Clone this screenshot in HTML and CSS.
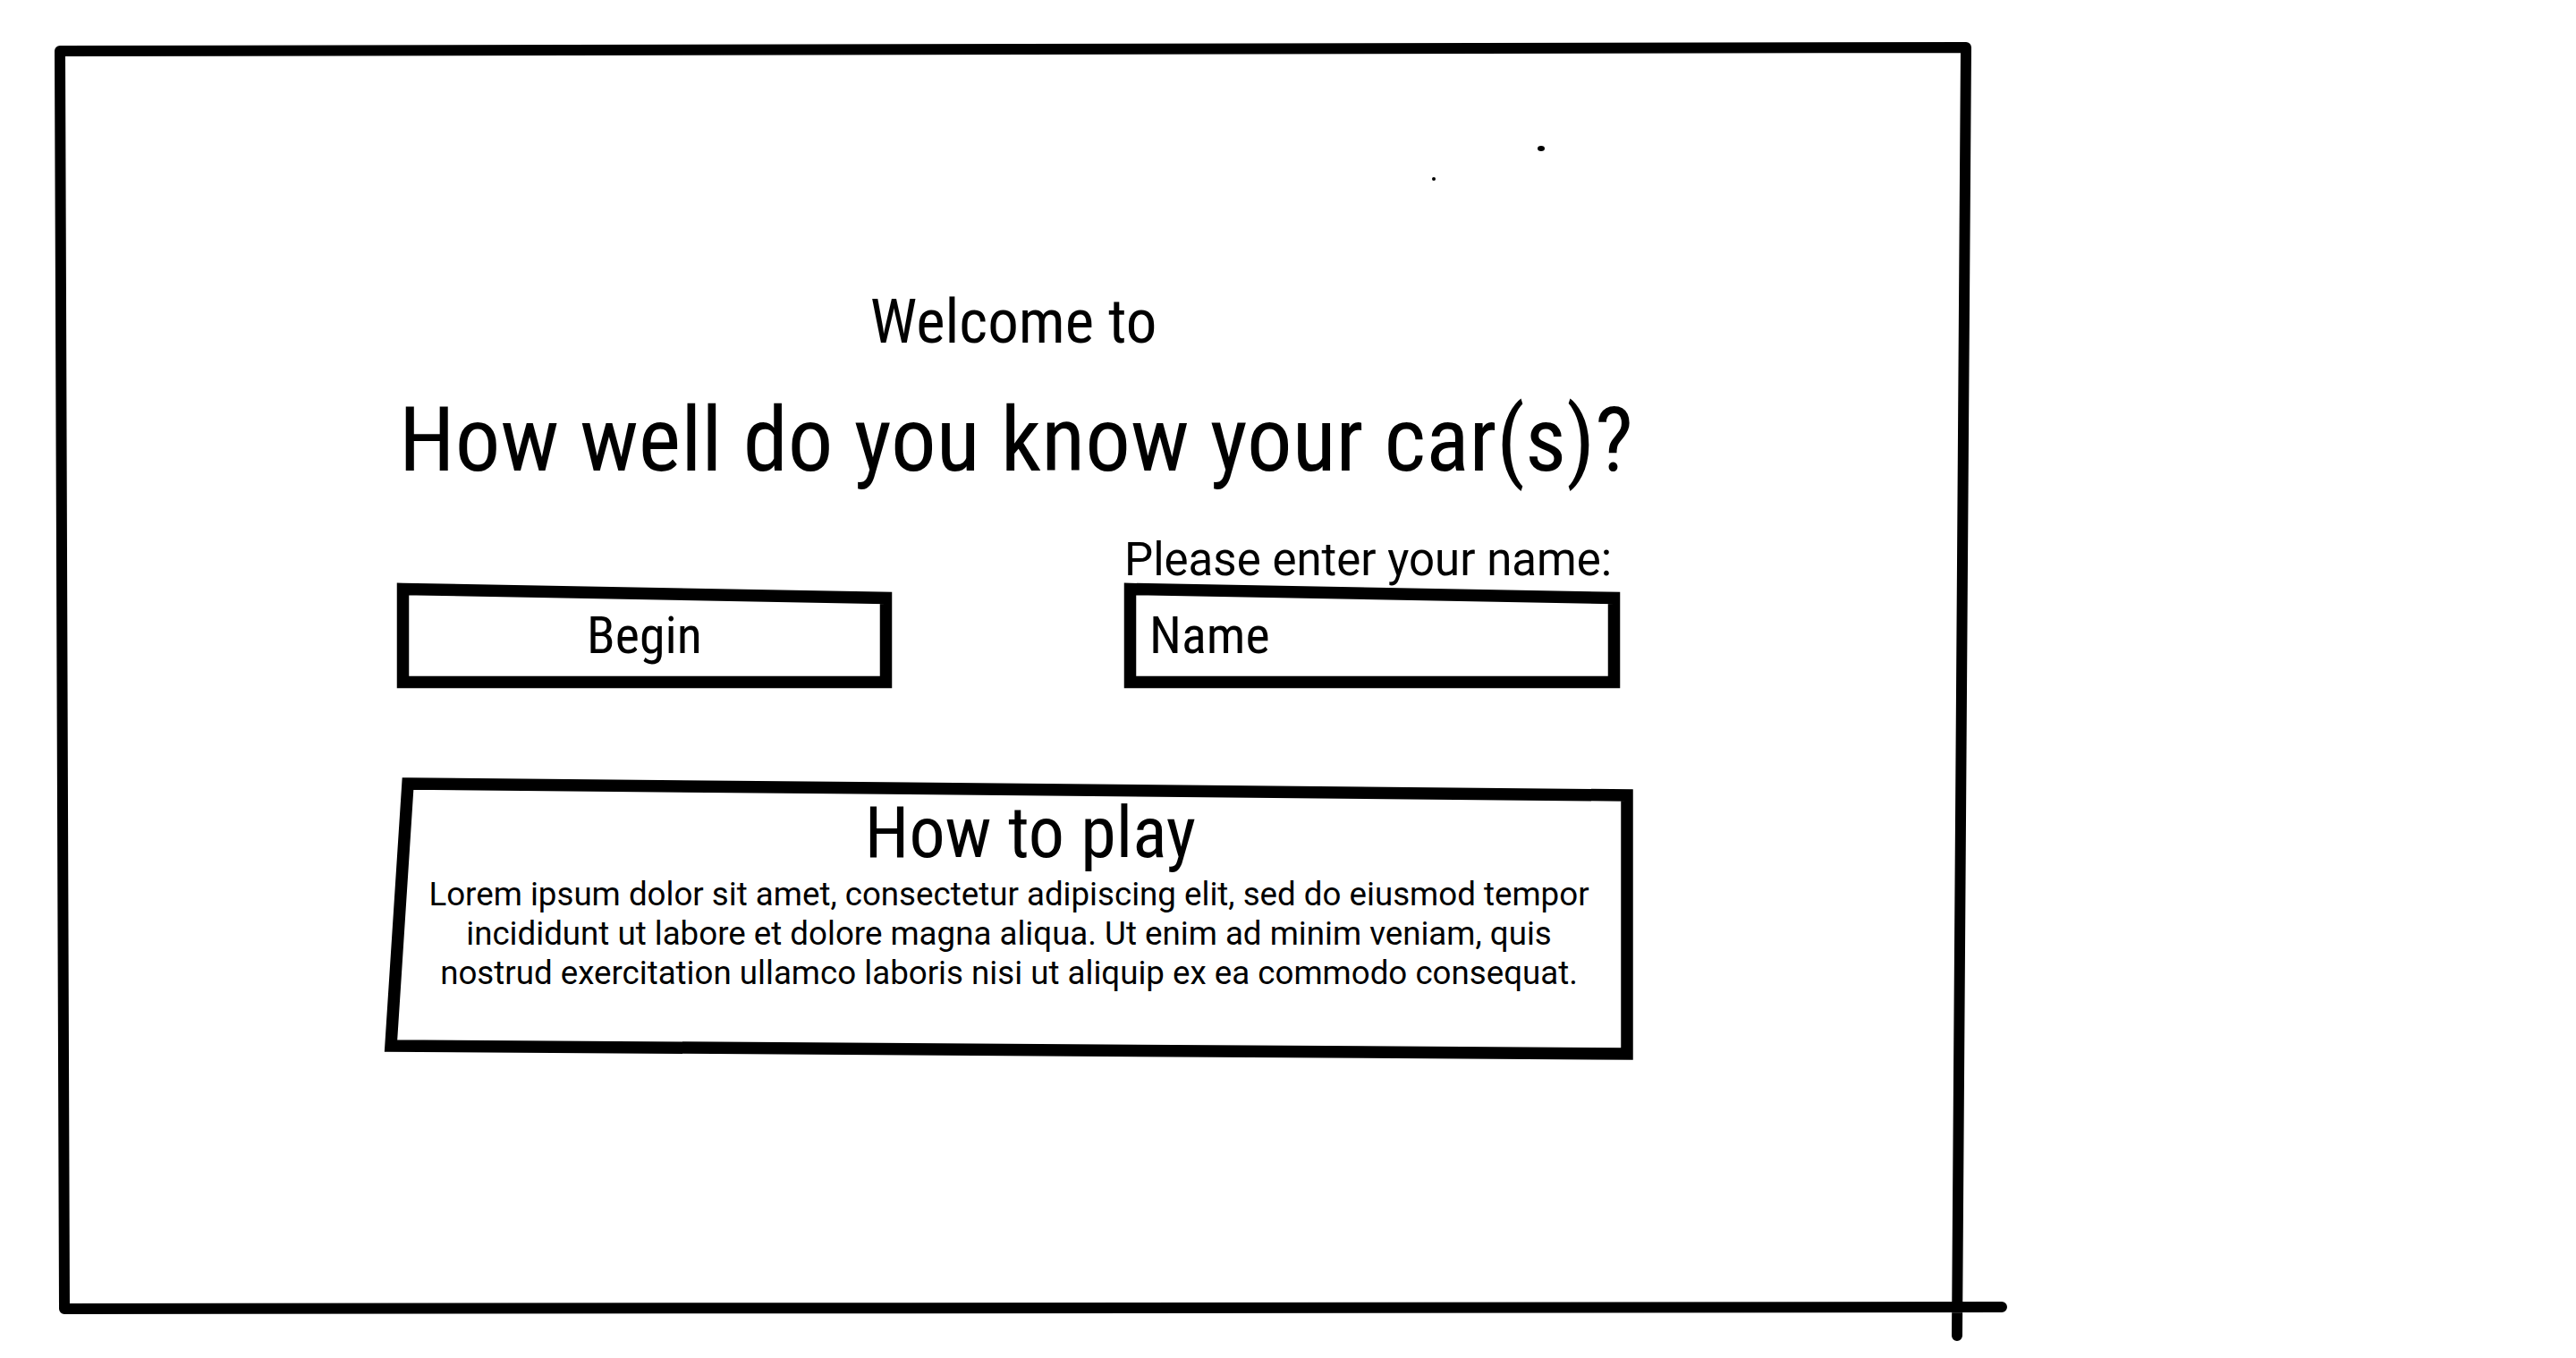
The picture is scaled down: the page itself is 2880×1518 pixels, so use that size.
FILE: index.html
```html
<!DOCTYPE html>
<html>
<head lang="en">
    <meta charset="UTF-8">
    <title>How well do you know your car(s)?</title>
    <link rel="stylesheet" href="styles.css">
</head>
<body>
<svg class="frame" width="2880" height="1518" viewBox="0 0 2880 1518">
    <path d="M67 57 L2198 53 M2198 53 L2188 1493 M72 1463 L2238 1461 M67 57 L72 1463"/>
    <ellipse cx="1723" cy="166" rx="4" ry="3"/>
    <circle cx="1603" cy="200" r="2"/>
</svg>
<div id="sheet">
    <h2 class="welcome">Welcome to</h2>
    <h1 class="title">How well do you know your car(s)?</h1>
    <div class="row">
        <div class="box btn">
            <svg class="edge" width="553" height="117" viewBox="0 0 553 117">
                <polygon points="6.5,6.5 546.5,16.5 546.5,110.5 6.5,110.5"/>
            </svg>
            <span>Begin</span>
        </div>
        <div class="field">
            <label class="label" for="name">Please enter your name:</label>
            <div class="box input">
                <svg class="edge" width="554" height="117" viewBox="0 0 554 117">
                    <polygon points="6.5,6.5 547.5,16.5 547.5,110.5 6.5,110.5"/>
                </svg>
                <span id="name">Name</span>
            </div>
        </div>
    </div>
    <div class="box howto">
        <svg class="edge" width="1396" height="316" viewBox="0 0 1396 316">
            <polygon points="26,7 1389,20 1389,309 7,300"/>
        </svg>
        <h3>How to play</h3>
        <p>Lorem ipsum dolor sit amet, consectetur adipiscing elit, sed do eiusmod tempor<br>
            incididunt ut labore et dolore magna aliqua. Ut enim ad minim veniam, quis<br>
            nostrud exercitation ullamco laboris nisi ut aliquip ex ea commodo consequat.</p>
    </div>
</div>
</body>
</html>
```

FILE: styles.css
```css
* {
    margin: 0;
    padding: 0;
    box-sizing: border-box;
}
html, body {
    background: #fff;
}
body {
    width: 2880px;
    height: 1518px;
    position: relative;
    overflow: hidden;
    font-family: Roboto, "Liberation Sans", sans-serif;
    font-weight: 400;
    color: #000;
}
.frame {
    position: absolute;
    top: 0;
    left: 0;
}
.frame path {
    fill: none;
    stroke: #000;
    stroke-width: 12;
    stroke-linecap: round;
}
.frame ellipse, .frame circle {
    fill: #000;
}
#sheet {
    position: relative;
    width: 1396px;
    margin-left: 430px;
    padding-top: 324px;
}
.welcome {
    font-size: 69px;
    line-height: 72px;
    font-weight: 400;
    font-stretch: 84%;
    text-align: center;
    padding-left: 10px;
}
.title {
    margin-top: 42px;
    font-size: 101px;
    line-height: 107px;
    font-weight: 400;
    font-stretch: 84%;
    text-align: center;
    white-space: nowrap;
    padding-left: 16px;
}
.row {
    margin-top: 57px;
    padding-left: 14px;
    display: grid;
    grid-template-columns: 553px 554px;
    column-gap: 260px;
    align-items: end;
}
.label {
    display: block;
    font-size: 51px;
    line-height: 48px;
    margin-bottom: 2px;
    white-space: nowrap;
}
.box {
    position: relative;
}
.edge {
    position: absolute;
    top: 0;
    left: 0;
    overflow: visible;
}
.edge polygon {
    fill: none;
    stroke: #000;
    stroke-width: 13.5;
    stroke-linejoin: miter;
}
.btn, .input {
    height: 117px;
    padding-top: 29px;
    font-size: 58px;
    line-height: 58px;
    font-stretch: 84%;
}
.btn {
    text-align: center;
}
.input {
    padding-left: 28px;
}
.btn span, .input span {
    position: relative;
}
.howto {
    margin-top: 100px;
    height: 316px;
    padding-top: 20px;
    text-align: center;
}
.howto h3 {
    position: relative;
    font-size: 80px;
    line-height: 84px;
    font-weight: 400;
    font-stretch: 84%;
    padding-left: 48px;
}
.howto p {
    position: relative;
    margin-top: 5px;
    font-size: 36.7px;
    line-height: 44px;
    white-space: nowrap;
}
```
